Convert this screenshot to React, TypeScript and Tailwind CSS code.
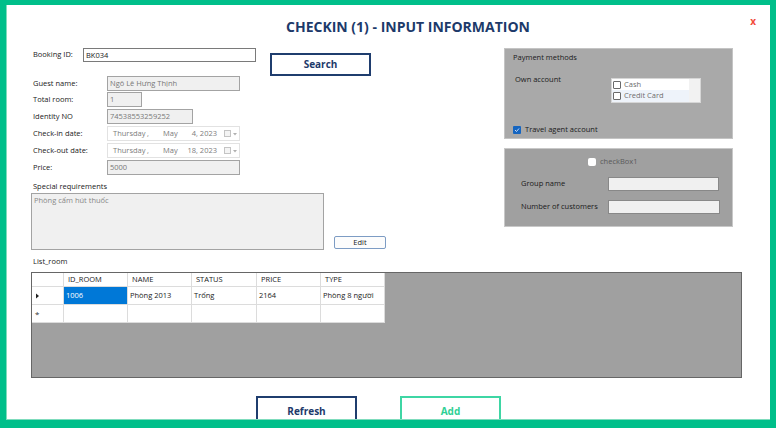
import React from "react";

function DisabledInput({ w, text }: { w: string; text: string }) {
  return (
    <div className={`${w} h-[15px] bg-[#f0f0f0] border border-[#a3a3a3] text-[#787878] text-[7.5px] leading-[13px] pl-[2px] whitespace-nowrap overflow-hidden`}>
      {text}
    </div>
  );
}

function DatePicker({ day }: { day: string }) {
  return (
    <div className="w-[133px] h-[15px] bg-white border border-[#e2e2e2] text-[#7c7c7c] text-[7.5px] leading-[13px] flex items-center pl-[5px] whitespace-nowrap">
      <span className="w-[34px]">Thursday</span>
      <span className="w-[16px]">,</span>
      <span className="w-[18px]">May</span>
      <span className="w-[36px] text-right">{day}, 2023</span>
      <span className="ml-[7px] w-[7px] h-[7px] border border-[#c4c4c4] bg-[#f4f4f4]"></span>
      <svg width="6" height="6" viewBox="0 0 6 6" className="ml-[1px]">
        <path d="M1 2 L5 2 L3 4.5 Z" fill="#b0b0b0" />
      </svg>
    </div>
  );
}

function Row({ label, children, mt }: { label: string; children: React.ReactNode; mt: string }) {
  return (
    <div className={`flex items-center h-[15px] shrink-0 ${mt}`}>
      <div className="w-[74px] text-[7.5px] text-[#1a1a1a] whitespace-nowrap">{label}</div>
      {children}
    </div>
  );
}

function SmallBox() {
  return <span className="inline-block w-[8px] h-[8px] border border-[#6a6a6a] bg-white rounded-[1px]"></span>;
}

export default function App() {
  const cols = [
    { w: "w-[64px]", name: "ID_ROOM", v: "1006" },
    { w: "w-[64px]", name: "NAME", v: "Phòng 2013" },
    { w: "w-[65px]", name: "STATUS", v: "Trống" },
    { w: "w-[64px]", name: "PRICE", v: "2164" },
    { w: "w-[64px]", name: "TYPE", v: "Phòng 8 người" },
  ];
  return (
    <div className="w-[776px] h-[428px] bg-[#00bf8a] pt-[5px] pl-[6px] pr-[6px] pb-[8px] font-['Open_Sans',sans-serif]">
      <div className="relative w-full h-full bg-white overflow-hidden flex flex-col border-l border-b border-[#7fdcbd]">
        <div className="h-[43px] shrink-0 flex items-center justify-center pl-[39px]">
          <div className="text-[14px] font-bold text-[#1d3a6a]">CHECKIN (1) - INPUT INFORMATION</div>
        </div>
        <div className="absolute right-[14px] top-[9px] text-[10px] font-bold text-[#f24b3b]">x</div>

        <div className="flex shrink-0 pl-[26px]">
          {/* left block */}
          <div className="w-[353px] flex flex-col">
            <div className="flex items-start h-[28px] shrink-0">
              <div className="flex items-center h-[14px]">
                <div className="w-[50px] text-[7.5px] text-[#1a1a1a] whitespace-nowrap">Booking ID:</div>
                <div className="w-[173px] h-[14px] border border-[#7a7a7a] bg-white text-[7.5px] leading-[12px] pl-[2px] text-[#1a1a1a]">BK034</div>
              </div>
              <div className="ml-[14px] mt-[5px] w-[101px] h-[23px] border-2 border-[#1f3d6e] flex items-center justify-center text-[10px] font-bold text-[#1d3a6a]">
                Search
              </div>
            </div>
            <Row label="Guest name:" mt="mt-0">
              <DisabledInput w="w-[133px]" text="Ngô Lê Hưng Thịnh" />
            </Row>
            <Row label="Total room:" mt="mt-[1px]">
              <DisabledInput w="w-[35px]" text="1" />
            </Row>
            <Row label="Identity NO" mt="mt-[2px]">
              <DisabledInput w="w-[86px]" text="74538553259252" />
            </Row>
            <Row label="Check-in date:" mt="mt-[2px]">
              <DatePicker day="4" />
            </Row>
            <Row label="Check-out date:" mt="mt-[2px]">
              <DatePicker day="18" />
            </Row>
            <Row label="Price:" mt="mt-[2px]">
              <DisabledInput w="w-[133px]" text="5000" />
            </Row>
            <div className="mt-[6px] shrink-0 h-[11px] leading-[11px] text-[7.5px] text-[#1a1a1a]">Special requirements</div>
            <div className="mt-[1px] shrink-0 flex items-end">
              <div className="ml-[-2px] w-[293px] h-[57px] bg-[#f0f0f0] border border-[#a3a3a3] text-[#888] text-[7.5px] leading-[12px] pl-[2px]">
                Phòng cấm hút thuốc
              </div>
              <div className="ml-[10px] mb-[1px] w-[52px] h-[13px] border border-[#7d9cc4] rounded-[2px] bg-[#fcfcfc] flex items-center justify-center text-[7.5px] text-[#1a1a1a]">
                Edit
              </div>
            </div>
          </div>

          {/* right block */}
          <div className="ml-[118px] w-[229px] flex flex-col">
            <div className="h-[91px] shrink-0 bg-[#a9a9a9] border border-[#c4c4c4] flex flex-col pl-[8px] pt-[3px] text-[7.5px] text-[#1a1a1a]">
              <div className="h-[11px] leading-[11px]">Payment methods</div>
              <div className="flex items-start mt-[11px]">
                <div className="pl-[2px] w-[98px] h-[11px] leading-[11px]">Own account</div>
                <div className="mt-[4px] w-[90px] h-[25px] bg-white border border-[#d6d6d6] flex">
                  <div className="flex-1 flex flex-col">
                    <div className="h-[11px] flex items-center pl-[1px] gap-[3px]">
                      <SmallBox />
                      <span className="text-[#6e6e6e]">Cash</span>
                    </div>
                    <div className="h-[12px] flex items-center pl-[1px] gap-[3px] bg-[#eef3fa]">
                      <SmallBox />
                      <span className="text-[#6e6e6e]">Credit Card</span>
                    </div>
                  </div>
                  <div className="w-[11px] bg-[#f2f2f2]"></div>
                </div>
              </div>
              <div className="mt-[21px] h-[11px] flex items-center gap-[4px]">
                <span className="w-[8px] h-[8px] rounded-[1px] bg-[#1565c0] flex items-center justify-center">
                  <svg width="6" height="6" viewBox="0 0 6 6">
                    <path d="M1 3 L2.5 4.5 L5 1.5" stroke="#dbe8ff" strokeWidth="0.9" fill="none" />
                  </svg>
                </span>
                <span>Travel agent account</span>
              </div>
            </div>

            <div className="mt-[9px] shrink-0 h-[79px] bg-[#a0a0a0] border border-[#c8c8c8] flex flex-col pt-[7px] text-[7.5px] text-[#1a1a1a]">
              <div className="h-[11px] flex items-center pl-[83px] gap-[4px]">
                <span className="w-[8px] h-[8px] rounded-[2px] bg-white"></span>
                <span className="text-[#5a5a5a]">checkBox1</span>
              </div>
              <div className="mt-[10px] h-[14px] flex items-center">
                <div className="pl-[16px] w-[103px]">Group name</div>
                <div className="w-[111px] h-[14px] bg-[#f0f0f0] border border-[#888]"></div>
              </div>
              <div className="mt-[9px] h-[14px] flex items-center">
                <div className="pl-[16px] w-[103px] whitespace-nowrap">Number of customers</div>
                <div className="w-[112px] h-[14px] bg-[#f0f0f0] border border-[#888]"></div>
              </div>
            </div>
          </div>
        </div>

        <div className="pl-[26px] shrink-0 mt-[6px] h-[11px] leading-[11px] text-[7.5px] text-[#1a1a1a]">List_room</div>

        <div className="ml-[24px] shrink-0 mt-[5px] w-[711px] h-[106px] bg-[#a0a0a0] border border-[#666] flex flex-col text-[7.5px] text-[#1a1a1a]">
          <div className="flex h-[14px]">
            <div className="w-[32px] bg-white border-r border-b border-[#dcdcdc]"></div>
            {cols.map((c) => (
              <div key={c.name} className={`${c.w} bg-white border-r border-b border-[#dcdcdc] flex items-center pl-[4px]`}>
                {c.name}
              </div>
            ))}
          </div>
          <div className="flex h-[18px]">
            <div className="w-[32px] bg-white border-r border-b border-[#dcdcdc] flex items-center pl-[3px]">
              <svg width="5" height="6" viewBox="0 0 5 6">
                <path d="M1 0.5 L4 3 L1 5.5 Z" fill="#222" />
              </svg>
            </div>
            {cols.map((c, i) => (
              <div
                key={c.name}
                className={`${c.w} border-r border-b border-[#dcdcdc] flex items-center pl-[2px] ${i === 0 ? "bg-[#0078d7] text-white" : "bg-white"}`}
              >
                {c.v}
              </div>
            ))}
          </div>
          <div className="flex h-[18px]">
            <div className="w-[32px] bg-white border-r border-b border-[#dcdcdc] flex items-center pl-[3px] text-[8px] text-[#333]">
              *
            </div>
            {cols.map((c) => (
              <div key={c.name} className={`${c.w} bg-white border-r border-b border-[#dcdcdc]`}></div>
            ))}
          </div>
        </div>

        <div className="flex shrink-0 mt-[18px] ml-[249px]">
          <div className="w-[101px] h-[28px] border-2 border-[#1f3d6e] flex items-start pt-[6px] justify-center text-[10px] font-bold text-[#1d3a6a]">
            Refresh
          </div>
          <div className="ml-[43px] w-[101px] h-[28px] border-2 border-[#3ed6a4] flex items-start pt-[6px] justify-center text-[10px] font-bold text-[#2fd095]">
            Add
          </div>
        </div>
      </div>
    </div>
  );
}
